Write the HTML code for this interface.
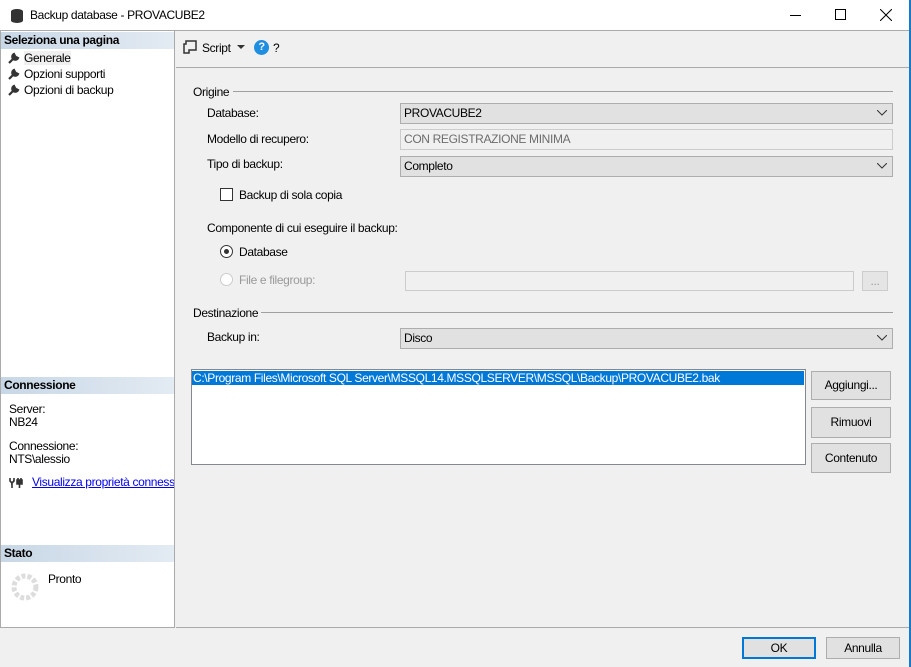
<!DOCTYPE html>
<html><head><meta charset="utf-8"><style>
*{box-sizing:border-box;margin:0;padding:0}
body{width:911px;height:667px;overflow:hidden;background:#f0f0f0;font-family:"Liberation Sans",sans-serif;font-size:12px;letter-spacing:-0.35px;color:#000;position:relative}
.a{position:absolute;white-space:nowrap}
.hdr{background:linear-gradient(90deg,#c8d7e6,#e3ebf3);font-weight:bold;font-size:12px;height:17px;line-height:17px;padding-left:3px;width:173px;left:1px}
.combo{position:absolute;background:#e1e1e1;border:1px solid #adadad;height:21px;line-height:19px;padding-left:3px}
.combo svg{position:absolute;right:5px;top:6px}
.btn{position:absolute;background:#e1e1e1;border:1px solid #adadad;text-align:center}
.wr{display:inline-block;width:12px;height:12px;vertical-align:-2px;margin-right:4px}
</style></head><body>
<div class="a" style="left:0;top:0;width:911px;height:31px;background:#fff;border-bottom:1px solid #aaa"></div>
<svg class="a" style="left:10px;top:8px" width="14" height="16"><ellipse cx="7" cy="3.5" rx="6" ry="2.5" fill="#333"/><rect x="1" y="3.5" width="12" height="9" fill="#333"/><ellipse cx="7" cy="12.5" rx="6" ry="2.5" fill="#333"/></svg>
<div class="a" style="left:30px;top:8px;font-size:12px">Backup database - PROVACUBE2</div>
<div class="a" style="left:790px;top:15px;width:11px;height:1px;background:#000"></div>
<div class="a" style="left:835px;top:9px;width:11px;height:11px;border:1px solid #000"></div>
<svg class="a" style="left:880px;top:9px" width="12" height="12"><path d="M0 0L12 12M12 0L0 12" stroke="#000"/></svg>
<div class="a" style="left:909px;top:0;width:2px;height:667px;background:#1979ca"></div>

<div class="a" style="left:0;top:31px;width:175px;height:597px;background:#fff;border:1px solid #aaa;border-top:none"></div>
<div class="a hdr" style="top:32px">Seleziona una pagina</div>
<div class="a" style="left:8px;top:51px"><svg class="wr" viewBox="0 0 12 12"><path d="M1 11L7 5M6 2a3 3 0 1 0 4 4L8 5 7 4z" stroke="#333" stroke-width="2.2" fill="#333"/></svg><span style="background:#f0f0f0">Generale</span></div>
<div class="a" style="left:8px;top:67px"><svg class="wr" viewBox="0 0 12 12"><path d="M1 11L7 5M6 2a3 3 0 1 0 4 4L8 5 7 4z" stroke="#333" stroke-width="2.2" fill="#333"/></svg>Opzioni supporti</div>
<div class="a" style="left:8px;top:83px"><svg class="wr" viewBox="0 0 12 12"><path d="M1 11L7 5M6 2a3 3 0 1 0 4 4L8 5 7 4z" stroke="#333" stroke-width="2.2" fill="#333"/></svg>Opzioni di backup</div>
<div class="a hdr" style="top:377px">Connessione</div>
<div class="a" style="left:9px;top:403px;line-height:13px">Server:<br>NB24</div>
<div class="a" style="left:9px;top:440px;line-height:13px">Connessione:<br>NTS\alessio</div>
<svg class="a" style="left:9px;top:477px" width="14" height="12"><path d="M1 1v3l2 2v5M5 1v3l-2 2M8 3h5v4H8zM9 1v2M12 1v2M10.5 7v4" stroke="#333" stroke-width="1.6" fill="#333"/></svg>
<div class="a" style="left:32px;top:475px;color:#0000ee;text-decoration:underline;width:142px;overflow:hidden">Visualizza proprietà connessione</div>
<div class="a hdr" style="top:545px">Stato</div>
<svg class="a" style="left:10px;top:572px" width="30" height="30"><circle cx="15" cy="15" r="11" fill="none" stroke="#ddd" stroke-width="5" stroke-dasharray="4 2"/></svg>
<div class="a" style="left:48px;top:572px">Pronto</div>

<div class="a" style="left:176px;top:67px;width:733px;height:1px;background:#aaa"></div>
<svg class="a" style="left:183px;top:40px" width="14" height="14"><path d="M3 1h10v9H6v3H1V4h2z" fill="none" stroke="#333" stroke-width="1.5"/></svg>
<div class="a" style="left:202px;top:41px">Script</div>
<svg class="a" style="left:237px;top:45px" width="9" height="5"><path d="M0 0h8L4 4z" fill="#333"/></svg>
<div class="a" style="left:254px;top:40px;width:15px;height:15px;border-radius:50%;background:#1e8ee0;color:#fff;font-weight:bold;text-align:center;line-height:15px;font-size:11px">?</div>
<div class="a" style="left:273px;top:41px">?</div>

<div class="a" style="left:193px;top:85px">Origine</div>
<div class="a" style="left:233px;top:91px;width:660px;height:1px;background:#a0a0a0"></div>
<div class="a" style="left:207px;top:106px">Database:</div>
<div class="combo" style="left:400px;top:103px;width:493px">PROVACUBE2<svg width="10" height="6"><path d="M0 0L5 5 10 0" fill="none" stroke="#333"/></svg></div>
<div class="a" style="left:207px;top:132px">Modello di recupero:</div>
<div class="a" style="left:400px;top:129px;width:493px;height:21px;border:1px solid #ccc;background:#f0f0f0;color:#6d6d6d;line-height:19px;padding-left:3px">CON REGISTRAZIONE MINIMA</div>
<div class="a" style="left:207px;top:157px">Tipo di backup:</div>
<div class="combo" style="left:400px;top:156px;width:493px">Completo<svg width="10" height="6"><path d="M0 0L5 5 10 0" fill="none" stroke="#333"/></svg></div>
<div class="a" style="left:220px;top:188px;width:13px;height:13px;border:1px solid #333;background:#fff"></div>
<div class="a" style="left:239px;top:188px">Backup di sola copia</div>
<div class="a" style="left:207px;top:221px">Componente di cui eseguire il backup:</div>
<div class="a" style="left:220px;top:245px;width:13px;height:13px;border:1px solid #333;border-radius:50%;background:#fff"><div style="position:absolute;left:3px;top:3px;width:5px;height:5px;border-radius:50%;background:#333"></div></div>
<div class="a" style="left:239px;top:245px">Database</div>
<div class="a" style="left:220px;top:273px;width:13px;height:13px;border:1px solid #ccc;border-radius:50%;background:#fff"></div>
<div class="a" style="left:239px;top:273px;color:#999">File e filegroup:</div>
<div class="a" style="left:405px;top:271px;width:449px;height:20px;border:1px solid #ccc;background:#f0f0f0"></div>
<div class="a" style="left:862px;top:271px;width:26px;height:20px;border:1px solid #ccc;background:#e5e5e5;color:#999;text-align:center;line-height:18px">...</div>

<div class="a" style="left:193px;top:306px">Destinazione</div>
<div class="a" style="left:261px;top:312px;width:632px;height:1px;background:#a0a0a0"></div>
<div class="a" style="left:207px;top:330px">Backup in:</div>
<div class="combo" style="left:400px;top:328px;width:493px">Disco<svg width="10" height="6"><path d="M0 0L5 5 10 0" fill="none" stroke="#333"/></svg></div>
<div class="a" style="left:191px;top:369px;width:615px;height:96px;border:1px solid #828790;background:#fff"></div>
<div class="a" style="left:192px;top:371px;width:612px;height:14px;background:#0078d7;color:#fff;line-height:14px;padding-left:1px">C:\Program Files\Microsoft SQL Server\MSSQL14.MSSQLSERVER\MSSQL\Backup\PROVACUBE2.bak</div>
<div class="btn" style="left:811px;top:371px;width:80px;height:29px;line-height:27px">Aggiungi...</div>
<div class="btn" style="left:811px;top:407px;width:80px;height:31px;line-height:29px">Rimuovi</div>
<div class="btn" style="left:811px;top:443px;width:80px;height:30px;line-height:28px">Contenuto</div>

<div class="a" style="left:176px;top:627px;width:733px;height:1px;background:#aaa"></div>
<div class="btn" style="left:742px;top:637px;width:74px;height:22px;line-height:18px;border:2px solid #0078d7">OK</div>
<div class="btn" style="left:826px;top:637px;width:74px;height:22px;line-height:20px">Annulla</div>
</body></html>
